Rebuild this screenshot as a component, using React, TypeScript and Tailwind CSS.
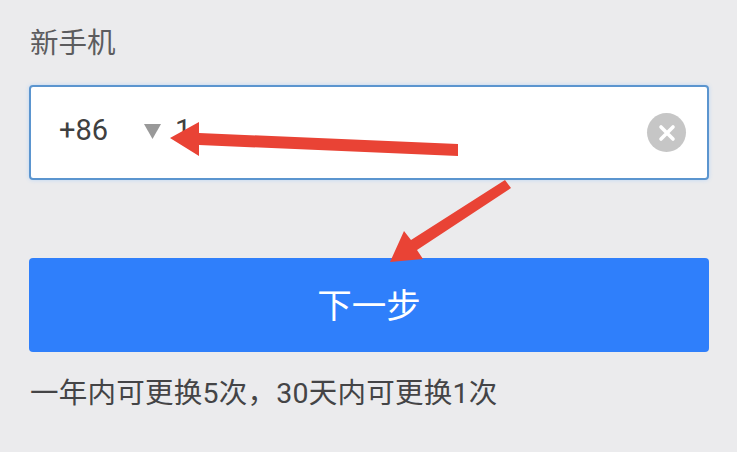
const FONT = "font-['Roboto','Noto_Sans_CJK_SC',sans-serif]";

function Arrows() {
  return (
    <svg className="absolute left-0 top-0" width="737" height="452" viewBox="0 0 737 452">
      <polygon fill="#e94335" points="170,138 199,122 199,133 458,144 458,156 199,145 199,156" />
      <polygon fill="#e94335" points="505,180 511,188 417,250 423,259 390,262 404,231 411,240" />
    </svg>
  );
}

export default function App() {
  return (
    <div className={`relative h-[452px] w-[737px] overflow-hidden bg-[#ebebed] pl-[29px] pr-[28px] pt-[24px] ${FONT}`}>
      <div className="h-[39px] pl-px text-[28.5px] leading-[39px] text-[#5c5c5e]">新手机</div>
      <div className="mt-[22px] flex h-[95px] items-center rounded-[4px] border-2 border-[#5b95cf] bg-white pl-[28px] pr-[21px] shadow-[0_0_4px_#bcd6f5]">
        <span className="mb-[4px] w-[85px] text-[29px] leading-none text-[#404040]">+86</span>
        <svg width="17" height="17" viewBox="0 0 16 16" className="mb-[2px]">
          <polygon fill="#999999" points="0,1 16,1 8,15" />
        </svg>
        <span className="mb-[4px] ml-[14px] text-[29px] leading-none text-[#404040]">1</span>
        <div className="ml-auto flex size-[39px] items-center justify-center rounded-full bg-[#c6c6c6]">
          <svg width="18" height="18" viewBox="0 0 18 18">
            <path d="M3 3 L15 15 M15 3 L3 15" stroke="#ffffff" strokeWidth="3.6" strokeLinecap="round" />
          </svg>
        </div>
      </div>
      <div className="mt-[78px] flex h-[94px] items-center justify-center rounded-[4px] bg-[#2f7ffb] pt-[3px] text-[34.5px] text-white">
        下一步
      </div>
      <div className="mt-[22px] pl-px text-[28.5px] leading-[39px] tracking-[0.25px] whitespace-nowrap text-[#444446]">
        一年内可更换5次，30天内可更换1次
      </div>
      <Arrows />
    </div>
  );
}
